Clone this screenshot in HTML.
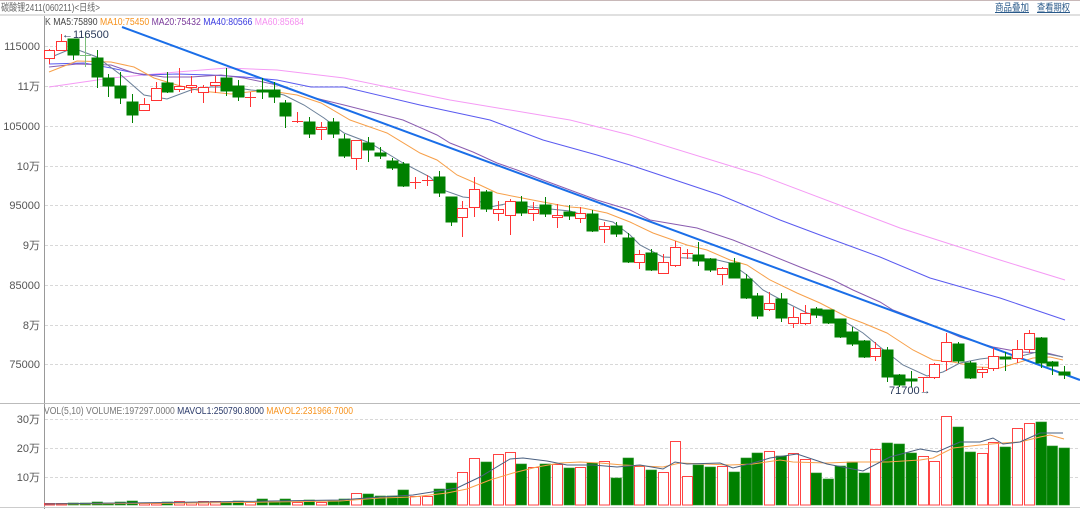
<!DOCTYPE html>
<html><head><meta charset="utf-8"><style>
html,body{margin:0;padding:0;background:#fff;width:1080px;height:509px;overflow:hidden}
svg{display:block}
text{font-family:"Liberation Sans","Noto Sans CJK SC",sans-serif}
</style></head><body>
<svg width="1080" height="509" viewBox="0 0 1080 509" xmlns="http://www.w3.org/2000/svg">
<rect x="0" y="0" width="1080" height="1" fill="#c8b8b8"/>
<rect x="0" y="14" width="1080" height="2" fill="#e0e0e0"/>
<text x="1" y="11" font-size="10" fill="#666" textLength="99" lengthAdjust="spacingAndGlyphs">碳酸锂2411(060211)&lt;日线&gt;</text>
<text x="995" y="11" font-size="10" fill="#2a5a8a" text-decoration="underline" textLength="34" lengthAdjust="spacingAndGlyphs">商品叠加</text>
<text x="1037" y="11" font-size="10" fill="#2a5a8a" text-decoration="underline" textLength="33" lengthAdjust="spacingAndGlyphs">查看期权</text>
<line x1="44.5" y1="16" x2="44.5" y2="509" stroke="#999"/>
<g stroke="#d8d8d8" stroke-dasharray="3,2">
<line x1="45" y1="46.5" x2="1080" y2="46.5"/><line x1="45" y1="86.5" x2="1080" y2="86.5"/><line x1="45" y1="126.5" x2="1080" y2="126.5"/><line x1="45" y1="166.5" x2="1080" y2="166.5"/><line x1="45" y1="205.5" x2="1080" y2="205.5"/><line x1="45" y1="245.5" x2="1080" y2="245.5"/><line x1="45" y1="285.5" x2="1080" y2="285.5"/><line x1="45" y1="325.5" x2="1080" y2="325.5"/><line x1="45" y1="364.5" x2="1080" y2="364.5"/>
<line x1="45" y1="419.5" x2="1080" y2="419.5"/><line x1="45" y1="448.5" x2="1080" y2="448.5"/><line x1="45" y1="477.5" x2="1080" y2="477.5"/>
</g>
<line x1="0" y1="403.5" x2="1080" y2="403.5" stroke="#bbb"/>
<line x1="0" y1="507.5" x2="1080" y2="507.5" stroke="#ccc"/>
<g font-size="11" fill="#555" text-anchor="end">
<text x="40" y="50">115000</text><text x="40" y="90">11万</text><text x="40" y="130">105000</text><text x="40" y="170">10万</text><text x="40" y="209">95000</text><text x="40" y="249">9万</text><text x="40" y="289">85000</text><text x="40" y="329">8万</text><text x="40" y="368">75000</text>
<text x="40" y="423">30万</text><text x="40" y="452">20万</text><text x="40" y="481">10万</text>
</g>
<text x="45" y="25" font-size="10" fill="#555" textLength="259" lengthAdjust="spacingAndGlyphs">K <tspan fill="#444">MA5:75890</tspan> <tspan fill="#f7931e">MA10:75450</tspan> <tspan fill="#7a3a9a">MA20:75432</tspan> <tspan fill="#3a3ae0">MA40:80566</tspan> <tspan fill="#f590f0">MA60:85684</tspan></text>
<text x="44" y="414" font-size="10" fill="#777" textLength="309" lengthAdjust="spacingAndGlyphs">VOL(5,10) VOLUME:197297.0000 <tspan fill="#2a3a6a">MAVOL1:250790.8000</tspan> <tspan fill="#f7931e">MAVOL2:231966.7000</tspan></text>
<g fill="none" stroke-width="1">
<polyline stroke="#f59af5" points="49,87 111,78 177,72 227,68 277,70 344,78 450,100 570,120 630,135 760,175 900,228 1000,260 1065,280"/>
<polyline stroke="#5a5af0" points="49,64 84,63 111,68 144,75 177,74 211,75 244,77 277,80 311,87 344,87 420,105 490,120 543,140 597,155 630,165 720,195 780,220 820,235 880,257 930,278 1000,298 1065,320"/>
<polyline stroke="#8a5cb0" points="49,67 77,64 111,65 134,73 164,77 191,77 221,75 244,78 277,85 311,97 344,105 403,120 437,135 450,143 473,152 497,163 517,170 543,180 570,190 597,200 630,210 650,220 697,228 733,240 763,252 800,267 833,280 853,290 880,302 893,310 927,323 960,337 993,347 1020,352 1047,353 1063,357"/>
<polyline stroke="#f7a04a" points="49,72 77,61 111,62 134,67 154,78 177,85 201,91 231,94 257,91 277,92 297,95 321,103 350,120 387,133 420,153 437,160 457,175 480,185 497,193 517,197 543,202 570,207 583,208 607,213 630,222 653,233 687,245 707,250 730,260 747,265 770,280 797,293 820,303 847,317 863,323 887,333 913,350 933,360 953,362 977,367 1000,368 1017,363 1033,358 1050,357 1063,360"/>
<polyline stroke="#6a7f98" points="49,58 73,48 97,57 121,75 144,95 167,99 191,90 211,87 231,87 251,90 271,92 284,95 304,105 324,118 344,133 370,143 403,163 430,177 443,190 463,197 473,198 490,207 510,203 530,207 550,209 570,211 590,217 613,222 630,235 640,245 663,257 687,258 713,259 730,263 747,275 763,290 787,303 807,313 827,317 847,323 863,333 880,347 903,365 927,376 943,372 960,363 980,359 997,357 1017,357 1037,352 1063,357"/>
</g>
<line x1="122" y1="27" x2="1080" y2="380" stroke="#1a6ee8" stroke-width="2"/>
<g stroke="#008000" fill="#008000">
<path fill="none" d="M73.5 39V60M97.5 50V88M108.5 74V97M120.5 72V104M132.5 94V123M167.5 72V93M226.5 68V96M238.5 80V101M262.5 78V99M274.5 82V103M285.5 100V128M309.5 117V138M333.5 118V138M344.5 134V158M368.5 137V162M380.5 147V159M392.5 158V170M403.5 162V187M439.5 171V197M451.5 197V226M486.5 190V212M521.5 196V216M545.5 197V217M569.5 205V220M592.5 210V232M616.5 222V237M628.5 233V263M651.5 249V271M698.5 242V266M710.5 258V272M734.5 258V278M746.5 274V299M757.5 293V319M781.5 293V322M816.5 307V318M828.5 310V324M840.5 319V338M852.5 327V346M864.5 340V358M887.5 347V382M899.5 374V387M911.5 371V387M958.5 342V363M970.5 361V379M1005.5 352V371M1041.5 337V368M1052.5 361V375M1064.5 366V379"/>
<rect x="68" y="39" width="11" height="16"/><rect x="92" y="58" width="11" height="19"/><rect x="103" y="78" width="11" height="8"/><rect x="115" y="86" width="11" height="12"/><rect x="127" y="102" width="11" height="13"/><rect x="162" y="83" width="11" height="9"/><rect x="221" y="78" width="11" height="13"/><rect x="233" y="86" width="11" height="11"/><rect x="257" y="90" width="11" height="2"/><rect x="269" y="90" width="11" height="7"/><rect x="280" y="103" width="11" height="13"/><rect x="304" y="122" width="11" height="12"/><rect x="328" y="122" width="11" height="12"/><rect x="339" y="139" width="11" height="17"/><rect x="363" y="143" width="11" height="7"/><rect x="375" y="153" width="11" height="3"/><rect x="387" y="161" width="11" height="7"/><rect x="398" y="164" width="11" height="22"/><rect x="434" y="177" width="11" height="16"/><rect x="446" y="197" width="11" height="25"/><rect x="481" y="192" width="11" height="17"/><rect x="516" y="202" width="11" height="11"/><rect x="540" y="205" width="11" height="9"/><rect x="564" y="212" width="11" height="4"/><rect x="587" y="214" width="11" height="17"/><rect x="611" y="226" width="11" height="8"/><rect x="623" y="238" width="11" height="24"/><rect x="646" y="253" width="11" height="17"/><rect x="693" y="255" width="11" height="6"/><rect x="705" y="259" width="11" height="11"/><rect x="729" y="263" width="11" height="15"/><rect x="741" y="279" width="11" height="19"/><rect x="752" y="296" width="11" height="20"/><rect x="776" y="299" width="11" height="19"/><rect x="811" y="309" width="11" height="6"/><rect x="823" y="310" width="11" height="13"/><rect x="835" y="319" width="11" height="18"/><rect x="847" y="332" width="11" height="12"/><rect x="859" y="341" width="11" height="16"/><rect x="882" y="350" width="11" height="27"/><rect x="894" y="375" width="11" height="10"/><rect x="906" y="379" width="11" height="2"/><rect x="953" y="344" width="11" height="17"/><rect x="965" y="363" width="11" height="15"/><rect x="1000" y="357" width="11" height="2"/><rect x="1036" y="338" width="11" height="25"/><rect x="1047" y="362" width="11" height="4"/><rect x="1059" y="372" width="11" height="3"/>
</g>
<g stroke="#7cbf7c"><line x1="85.5" y1="32" x2="85.5" y2="67"/><line x1="80" y1="55.5" x2="91" y2="55.5"/></g>
<g stroke="#ff3333" fill="#fff">
<path fill="none" d="M49.5 49V64M61.5 34V50M144.5 98V111M156.5 82V100M179.5 68V92M191.5 76V93M203.5 85V103M215.5 76V93M250.5 92V107M297.5 112V123M321.5 122V140M356.5 140V170M415.5 177V189M427.5 175V186M462.5 201V237M474.5 177V217M498.5 201V221M510.5 199V235M533.5 202V221M557.5 204V228M580.5 207V223M604.5 222V243M639.5 250V269M663.5 254V273M675.5 241V267M687.5 249V259M722.5 267V285M769.5 292V311M793.5 307V328M805.5 305V325M875.5 342V361M923.5 377V392M934.5 363V379M946.5 333V371M982.5 367V378M993.5 348V371M1017.5 340V363M1029.5 330V353M245 97.5H256M292 121.5H303M410 182.5H421M422 180.5H433M682 253.5H693M918 377.5H929"/>
<rect x="44.5" y="50.5" width="10" height="8"/><rect x="56.5" y="41.5" width="10" height="9"/><rect x="139.5" y="104.5" width="10" height="6"/><rect x="151.5" y="88.5" width="10" height="12"/><rect x="174.5" y="86.5" width="10" height="3"/><rect x="186.5" y="85.5" width="10" height="2"/><rect x="198.5" y="87.5" width="10" height="5"/><rect x="210.5" y="82.5" width="10" height="3"/><rect x="316.5" y="127.5" width="10" height="2"/><rect x="351.5" y="140.5" width="10" height="18"/><rect x="457.5" y="208.5" width="10" height="9"/><rect x="469.5" y="189.5" width="10" height="18"/><rect x="493.5" y="209.5" width="10" height="4"/><rect x="505.5" y="201.5" width="10" height="14"/><rect x="528.5" y="209.5" width="10" height="4"/><rect x="552.5" y="215.5" width="10" height="2"/><rect x="575.5" y="213.5" width="10" height="5"/><rect x="599.5" y="226.5" width="10" height="3"/><rect x="634.5" y="254.5" width="10" height="8"/><rect x="658.5" y="262.5" width="10" height="11"/><rect x="670.5" y="247.5" width="10" height="18"/><rect x="717.5" y="268.5" width="10" height="6"/><rect x="764.5" y="303.5" width="10" height="6"/><rect x="788.5" y="317.5" width="10" height="6"/><rect x="800.5" y="313.5" width="10" height="10"/><rect x="870.5" y="348.5" width="10" height="8"/><rect x="929.5" y="364.5" width="10" height="13"/><rect x="941.5" y="342.5" width="10" height="19"/><rect x="977.5" y="369.5" width="10" height="3"/><rect x="988.5" y="356.5" width="10" height="12"/><rect x="1012.5" y="349.5" width="10" height="9"/><rect x="1024.5" y="333.5" width="10" height="16"/>
</g>
<text x="62" y="38" font-size="11" fill="#2a3a5a">←116500</text>
<text x="889" y="394" font-size="11" fill="#2a3a5a">71700→</text>
<g fill="#008000" stroke="#2a942a" stroke-width="0.6">
<rect x="68" y="503" width="10.5" height="2"/><rect x="80" y="503" width="10.5" height="2"/><rect x="92" y="502" width="10.5" height="3"/><rect x="103" y="503" width="10.5" height="2"/><rect x="115" y="502" width="10.5" height="3"/><rect x="127" y="501" width="10.5" height="4"/><rect x="162" y="502" width="10.5" height="3"/><rect x="221" y="502" width="10.5" height="3"/><rect x="233" y="501" width="10.5" height="4"/><rect x="257" y="499" width="10.5" height="6"/><rect x="269" y="502" width="10.5" height="3"/><rect x="280" y="499" width="10.5" height="6"/><rect x="304" y="500" width="10.5" height="5"/><rect x="328" y="501" width="10.5" height="4"/><rect x="339" y="499" width="10.5" height="6"/><rect x="363" y="494" width="10.5" height="11"/><rect x="375" y="496" width="10.5" height="9"/><rect x="387" y="496" width="10.5" height="9"/><rect x="398" y="490" width="10.5" height="15"/><rect x="434" y="489" width="10.5" height="16"/><rect x="446" y="483" width="10.5" height="22"/><rect x="481" y="462" width="10.5" height="43"/><rect x="516" y="464" width="10.5" height="41"/><rect x="540" y="464" width="10.5" height="41"/><rect x="564" y="468" width="10.5" height="37"/><rect x="587" y="463" width="10.5" height="42"/><rect x="611" y="478" width="10.5" height="27"/><rect x="623" y="458" width="10.5" height="47"/><rect x="646" y="470" width="10.5" height="35"/><rect x="693" y="465" width="10.5" height="40"/><rect x="705" y="467" width="10.5" height="38"/><rect x="729" y="472" width="10.5" height="33"/><rect x="741" y="458" width="10.5" height="47"/><rect x="752" y="453" width="10.5" height="52"/><rect x="776" y="456" width="10.5" height="49"/><rect x="811" y="473" width="10.5" height="32"/><rect x="823" y="479" width="10.5" height="26"/><rect x="835" y="466" width="10.5" height="39"/><rect x="847" y="462" width="10.5" height="43"/><rect x="859" y="473" width="10.5" height="32"/><rect x="882" y="443" width="10.5" height="62"/><rect x="894" y="444" width="10.5" height="61"/><rect x="906" y="453" width="10.5" height="52"/><rect x="953" y="427" width="10.5" height="78"/><rect x="965" y="452" width="10.5" height="53"/><rect x="1000" y="447" width="10.5" height="58"/><rect x="1036" y="422" width="10.5" height="83"/><rect x="1047" y="446" width="10.5" height="59"/><rect x="1059" y="448" width="10.5" height="57"/>
</g>
<g fill="#fff" stroke="#ff4444">
<rect x="44.5" y="503.5" width="10" height="1.5"/><rect x="56.5" y="503.5" width="10" height="1.5"/><rect x="139.5" y="503.5" width="10" height="1.5"/><rect x="151.5" y="503.5" width="10" height="1.5"/><rect x="174.5" y="501.5" width="10" height="3.5"/><rect x="186.5" y="502.5" width="10" height="2.5"/><rect x="198.5" y="501.5" width="10" height="3.5"/><rect x="210.5" y="501.5" width="10" height="3.5"/><rect x="245.5" y="502.5" width="10" height="2.5"/><rect x="292.5" y="502.5" width="10" height="2.5"/><rect x="316.5" y="502.5" width="10" height="2.5"/><rect x="351.5" y="493.5" width="10" height="11.5"/><rect x="410.5" y="496.5" width="10" height="8.5"/><rect x="422.5" y="496.5" width="10" height="8.5"/><rect x="457.5" y="472.5" width="10" height="32.5"/><rect x="469.5" y="458.5" width="10" height="46.5"/><rect x="493.5" y="454.5" width="10" height="50.5"/><rect x="505.5" y="452.5" width="10" height="52.5"/><rect x="528.5" y="467.5" width="10" height="37.5"/><rect x="552.5" y="464.5" width="10" height="40.5"/><rect x="575.5" y="467.5" width="10" height="37.5"/><rect x="599.5" y="461.5" width="10" height="43.5"/><rect x="634.5" y="466.5" width="10" height="38.5"/><rect x="658.5" y="472.5" width="10" height="32.5"/><rect x="670.5" y="441.5" width="10" height="63.5"/><rect x="682.5" y="476.5" width="10" height="28.5"/><rect x="717.5" y="466.5" width="10" height="38.5"/><rect x="764.5" y="451.5" width="10" height="53.5"/><rect x="788.5" y="453.5" width="10" height="51.5"/><rect x="800.5" y="459.5" width="10" height="45.5"/><rect x="870.5" y="449.5" width="10" height="55.5"/><rect x="918.5" y="456.5" width="10" height="48.5"/><rect x="929.5" y="461.5" width="10" height="43.5"/><rect x="941.5" y="416.5" width="10" height="88.5"/><rect x="977.5" y="453.5" width="10" height="51.5"/><rect x="988.5" y="442.5" width="10" height="62.5"/><rect x="1012.5" y="428.5" width="10" height="76.5"/><rect x="1024.5" y="423.5" width="10" height="81.5"/>
</g>
<g fill="none" stroke-width="1">
<polyline stroke="#f7a04a" points="45,504 200,503 340,501 380,498 413,497 447,493 467,489 490,480 513,473 537,467 560,463 580,462 600,463 623,465 663,467 680,463 730,465 753,464 780,460 793,462 827,463 853,462 887,462 920,460 933,458 953,448 980,445 1003,443 1020,442 1040,437 1050,435 1064,439"/>
<polyline stroke="#4a6080" points="45,504 200,502 340,500 380,497 413,495 457,488 480,477 510,459 523,458 547,461 567,465 593,465 617,467 640,465 663,469 675,462 687,464 720,463 733,468 753,463 770,458 797,454 827,464 863,471 890,457 920,449 937,452 960,442 980,442 993,438 1003,444 1020,442 1040,433 1063,433"/>
</g>
</svg>
</body></html>
